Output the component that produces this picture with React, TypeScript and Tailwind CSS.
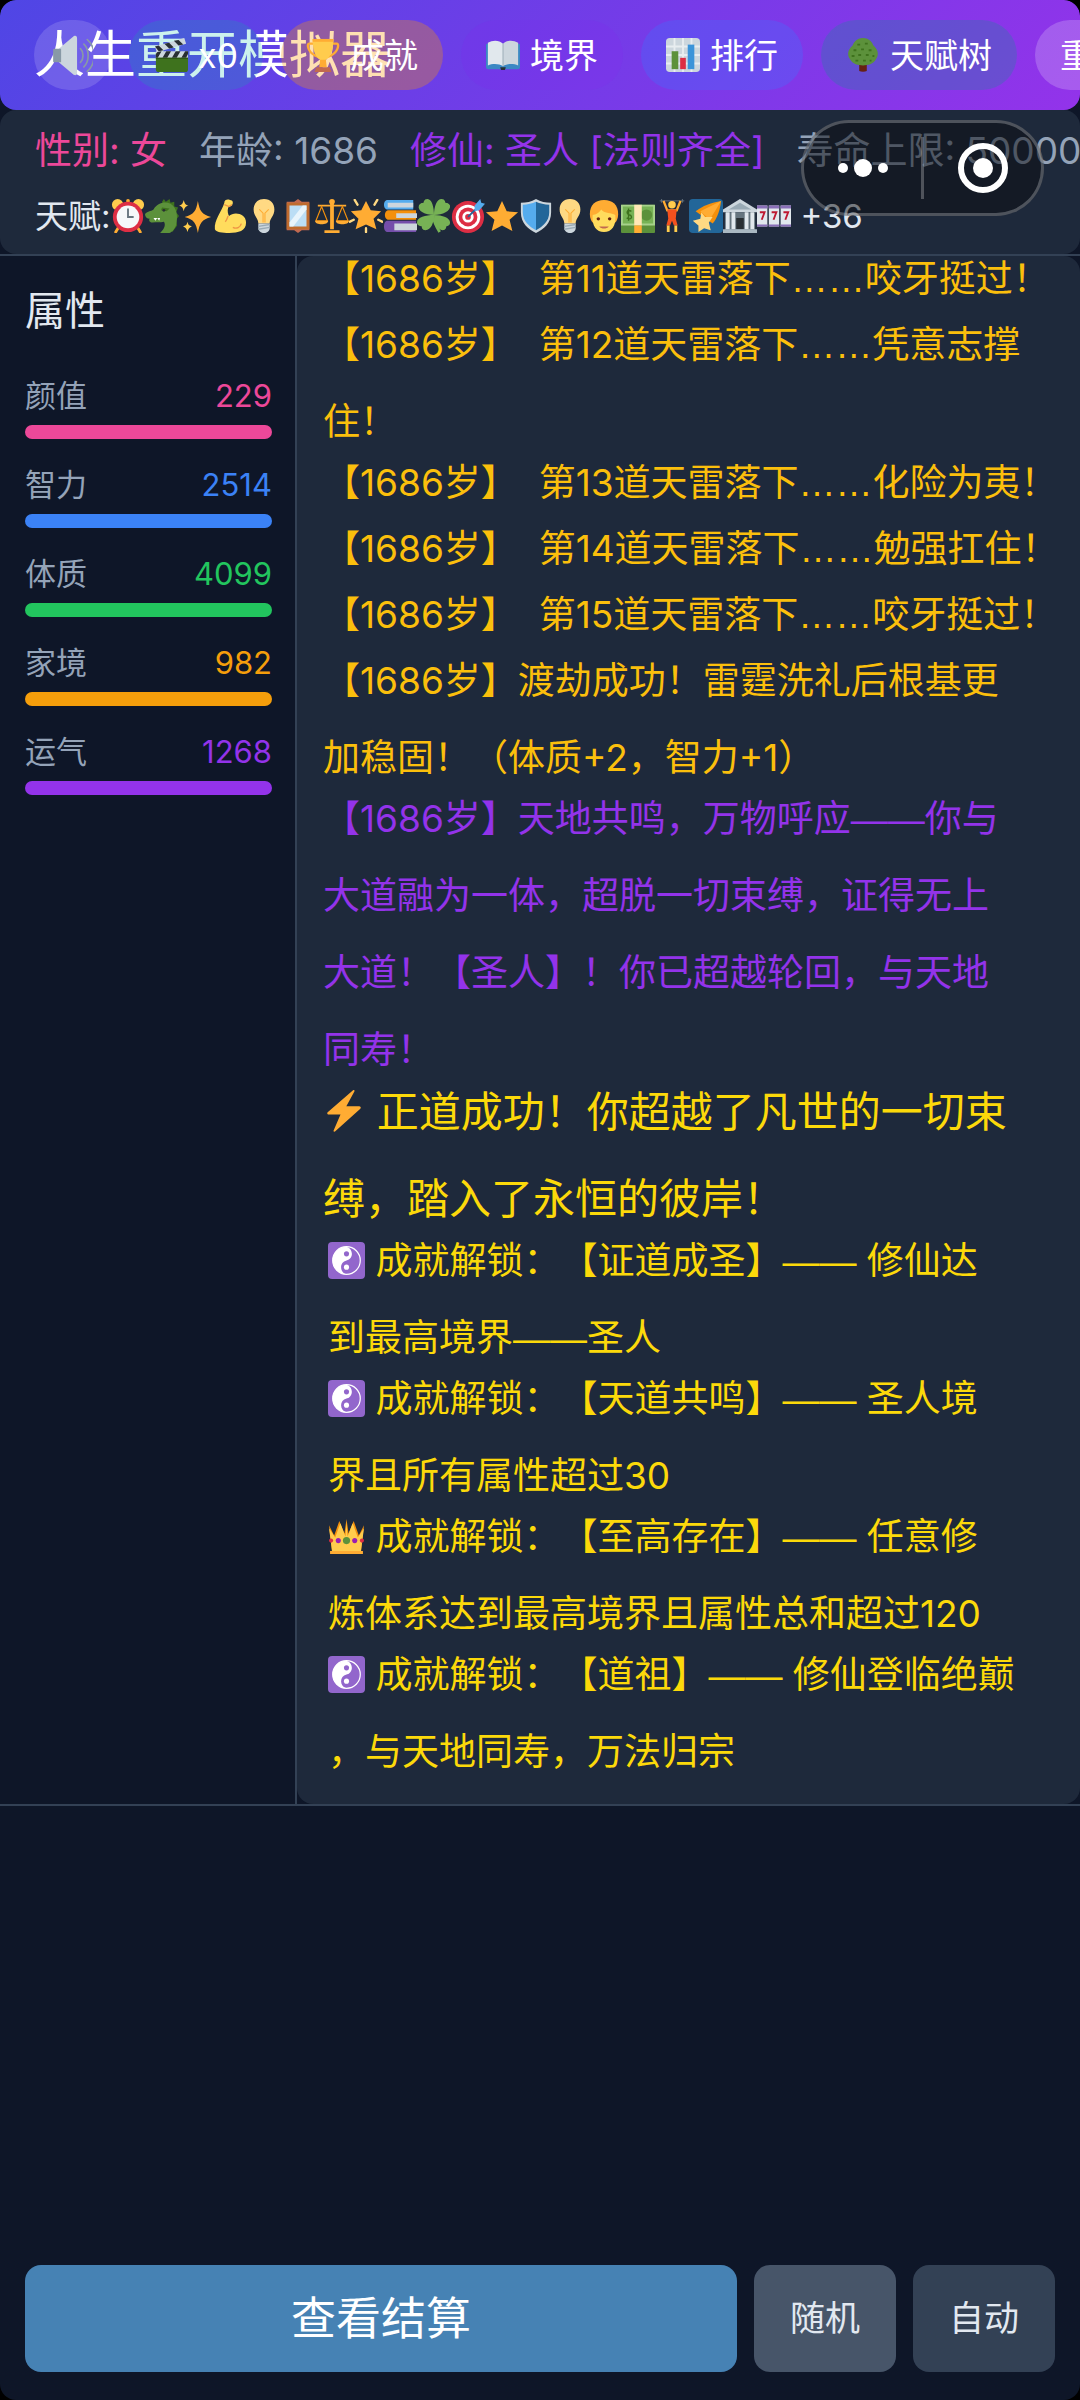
import React from 'react';

const ICONS: Record<string, React.ReactNode> = {
  speaker: (
    <>
      <path d="M6 12 19 1c2-1 3 0 3 2v30c0 2-1 3-3 2L6 24z" fill="#ccd6dd" />
      <path d="M2 12h6v12H2c-1 0-1-1-1-1V13s0-1 1-1z" fill="#8899a6" />
      <path d="M25 12c3 3 3 9 0 12M28 8c5 5 5 15 0 20M31 4c8 7 8 21 0 28" fill="none" stroke="#8899a6" strokeWidth="1.5" strokeLinecap="round" />
    </>
  ),
  clapper: (
    <>
      <path d="M2 15h34v18c0 2-1 3-3 3H5c-2 0-3-1-3-3z" fill="#3e721d" />
      <path d="M2 14h34v7H2z" fill="#ccd6dd" />
      <path d="m4 14 4 0-4 7H2v-4zM13 14h5l-4 7H9zM23 14h5l-4 7h-5zM33 14h3v3l-2 4h-5z" fill="#292f33" />
      <path d="M1 9 32 0l2 6L3 15z" fill="#ccd6dd" />
      <path d="m1 9 4-1 5 5-5 1zM11 6l5-1 5 5-5 1zM21 3l5-1 5 5-5 1z" fill="#292f33" />
      <path d="M2 21h34v1H2z" fill="#2a5110" />
    </>
  ),
  trophy: (
    <>
      <path d="M8 6H3C1 6 1 16 13 20M28 6h5c2 0 2 10-10 14" fill="none" stroke="#ffac33" strokeWidth="2.5" />
      <path d="M7 1h22c0 14-4 20-8 22v5h-6v-5C11 21 7 15 7 1z" fill="#ffcc4d" />
      <path d="M7 1h22v3H7z" fill="#ffac33" />
      <path d="M15 23h6l1 8h-8z" fill="#ffac33" />
      <path d="M11 31h14l2 5H9z" fill="#c1694f" />
    </>
  ),
  book: (
    <>
      <path d="M0 7c0-1 1-1 2-1h32c1 0 2 0 2 1v24c0 1-1 2-2 2H2c-1 0-2-1-2-2z" fill="#3b88c3" />
      <path d="M2 5c5-3 12-3 16 1v24c-4-3-11-3-16-1z" fill="#e1e8ed" />
      <path d="M34 5c-5-3-12-3-16 1v24c4-3 11-3 16-1z" fill="#ccd6dd" />
      <path d="M18 6v24" stroke="#99aab5" fill="none" />
      <path d="M15 31h6l-1 3h-4z" fill="#292f33" />
    </>
  ),
  chart: (
    <>
      <rect width="36" height="36" rx="4" fill="#ccd6dd" />
      <path d="M0 9h36M0 18h36M0 27h36M9 0v36M18 0v36M27 0v36" stroke="#e8edf0" strokeWidth="2" />
      <path d="M6 14h7v19H6z" fill="#5c913b" />
      <path d="M15 21h6v12h-6z" fill="#dd2e44" />
      <path d="M23 7h7v26h-7z" fill="#3b94d9" />
    </>
  ),
  tree: (
    <>
      <path d="M14 27h8v8c-2 1-6 1-8 0z" fill="#662113" />
      <path d="M18 0c7 0 10 5 11 8 5 4 6 10 3 14-3 6-9 7-14 7S7 28 4 22C1 18 2 12 7 8c1-3 4-8 11-8z" fill="#5c913b" />
      <path d="M12 7h3M20 6h3M8 13h3M16 12h3M24 13h3M6 19h3M13 18h3M21 18h3M28 19h2M10 24h3M18 24h3M25 24h2" stroke="#3e721d" strokeWidth="2" />
    </>
  ),
  clock: (
    <>
      <circle cx="7" cy="6" r="6" fill="#ffcc4d" />
      <circle cx="29" cy="6" r="6" fill="#ffcc4d" />
      <path d="m8 30-3 5M28 30l3 5" stroke="#ffac33" strokeWidth="3" strokeLinecap="round" />
      <circle cx="18" cy="2" r="2" fill="#ffac33" />
      <circle cx="18" cy="19" r="16" fill="#dd2e44" />
      <circle cx="18" cy="19" r="12" fill="#f5f8fa" />
      <path d="M18 10v9h6" fill="none" stroke="#66757f" strokeWidth="2" />
    </>
  ),
  dragon: (
    <>
      <path d="M18 3 20 0l2 3 4-3 1 4 4-1v5l4 1-2 5 3 4-3 4 1 6-5 7z" fill="#3e721d" />
      <path d="M0 16c2-3 6-3 9-5 4-7 12-9 18-6 7 4 8 14 6 22-1 4-4 8-7 9H16c5-5 6-9 4-12-4 1-8 0-12 1-4 0-4-3-3-4-3 0-5-2-5-5z" fill="#5c913b" />
      <path d="M5 20h11l-1 3-2-3-2 3-2-3z" fill="#fff" />
      <path d="m18 9 8 1-3 3-6-1z" fill="#3e721d" />
      <circle cx="20" cy="12" r="1.5" fill="#292f33" />
    </>
  ),
  sparkles: (
    <>
      <path d="M20 2c2 11 4 14 14 17-10 3-12 6-14 17-2-11-4-14-14-17 10-3 12-6 14-17z" fill="#ffac33" />
      <path d="M5 1c1 4 2 5 5 6-3 1-4 2-5 6-1-4-2-5-5-6 3-1 4-2 5-6zM9 24c1 4 2 4 5 5-3 1-4 2-5 6-1-4-2-5-5-6 3-1 4-1 5-5z" fill="#ffcc4d" />
    </>
  ),
  muscle: (
    <>
      <path d="M12 4c0-3 3-4 6-3 3 0 4 3 2 6l-4 2c-1 4 0 7 1 9 5-5 18-3 18 7 0 9-8 11-18 11-7 0-14-1-15-4C1 22 9 14 12 4z" fill="#ffdc5d" />
      <path d="m12 6 5 2 3-2M16 18c-1 2-1 4-3 6M21 30c4 2 8 0 9-4" fill="none" stroke="#ef9645" strokeWidth="1.5" />
    </>
  ),
  bulb: (
    <>
      <path d="M18 0c7 0 11 5 11 11 0 7-5 9-5 15H12c0-6-5-8-5-15C7 5 11 0 18 0z" fill="#ffd983" />
      <path d="M17 25V15l-4-4M19 25V15l4-4" fill="none" stroke="#ffac33" strokeWidth="1.2" />
      <path d="M12 26h12v5c0 3-3 5-6 5s-6-2-6-5z" fill="#ccd6dd" />
      <path d="m12 29 12-2M12 32l12-2" stroke="#99aab5" strokeWidth="1.5" />
    </>
  ),
  mirror: (
    <>
      <path d="M6 3h8l4-3 4 3h8v30h-8l-4 3-4-3H6z" fill="#c1694f" />
      <path d="M6 4h24v28H6z" fill="#bf6b2e" />
      <path d="M9 7h18v22H9z" fill="#bbddf5" />
      <path d="M9 25 23 7h4v4L13 29H9z" fill="#e8f4fc" />
    </>
  ),
  scales: (
    <>
      <path d="M16 2h4v30h-4zM3 6h30v2H3zM10 33h16v3H10z" fill="#ffac33" />
      <circle cx="18" cy="3" r="3" fill="#ffac33" />
      <path d="M7 8 1 23h12zM29 8l-6 15h12z" fill="none" stroke="#f4900c" strokeWidth="1.2" />
      <path d="M0 23h14c0 5-14 5-14 0zM22 23h14c0 5-14 5-14 0z" fill="#ffac33" />
    </>
  ),
  glow: (
    <>
      <path d="m18 2 5 10 11 1-8 8 3 11-11-5-11 5 3-11-8-8 11-1z" fill="#ffac33" />
      <path d="m6 1 3 5M30 1l-3 5M1 24l4-2M35 24l-4-2M18 31v4" stroke="#ffd983" strokeWidth="2.5" strokeLinecap="round" />
    </>
  ),
  books: (
    <>
      <path d="M4 1h28v10H4C0 10 0 2 4 1z" fill="#55acee" />
      <path d="M5 4h27v5H5z" fill="#ccd6dd" />
      <path d="M5 12h30v10H5c-4-1-4-9 0-10z" fill="#f4900c" />
      <path d="M14 15h22v5H14z" fill="#ccd6dd" />
      <path d="M4 23h31v12H4c-4-1-4-11 0-12z" fill="#744eaa" />
      <path d="M12 26h24v7H12z" fill="#ccd6dd" />
    </>
  ),
  clover: (
    <>
      <path d="M17 18c1 7 4 12 7 17" fill="none" stroke="#77b255" strokeWidth="3" />
      <path d="M18 17C9 17 0 13 2 7c1-3 5-3 5-3s0-4 4-4c5 0 7 9 7 17zM18 17c0-9 3-17 8-17 4 0 4 4 4 4s4 0 5 3c1 6-8 10-17 10zM18 17c-9 0-18 2-18 8 0 4 5 4 5 4s0 4 4 4c6 0 9-8 9-16zM18 17c9 0 17 3 17 8 0 4-4 4-4 4s0 4-4 4c-5 0-9-8-9-16z" fill="#77b255" />
    </>
  ),
  target: (
    <>
      <circle cx="18" cy="19" r="17" fill="#dd2e44" />
      <circle cx="18" cy="19" r="13" fill="#fff" />
      <circle cx="18" cy="19" r="10" fill="#dd2e44" />
      <circle cx="18" cy="19" r="6" fill="#fff" />
      <circle cx="18" cy="19" r="3" fill="#dd2e44" />
      <path d="M18 19 29 8" stroke="#269" strokeWidth="2" />
      <path d="m25 7 6-7 1 4 4 1-6 7-5 1z" fill="#55acee" />
    </>
  ),
  star: <path d="m18 2 5 11 12 1-9 8 3 12-11-6-11 6 3-12-9-8 12-1z" fill="#ffac33" />,
  shield: (
    <>
      <path d="M18 0c5 3 10 4 16 4v10c0 12-8 18-16 22C10 32 2 26 2 14V4c6 0 11-1 16-4z" fill="#ccd6dd" />
      <path d="M18 3v30C11 29 4 24 4 14V6c5 0 10-1 14-3z" fill="#55acee" />
      <path d="M18 3v30c7-4 14-9 14-19V6c-5 0-10-1-14-3z" fill="#226699" />
    </>
  ),
  boy: (
    <>
      <path d="M3 16C3 6 9 1 18 1s15 5 15 15c0 5-2 8-3 9H6c-1-1-3-4-3-9z" fill="#ffac33" />
      <path d="M6 17c5-1 8-4 9-6 4 5 11 3 15 6 1 12-4 18-12 18S5 29 6 17z" fill="#ffdc5d" />
      <circle cx="12" cy="21" r="1.8" fill="#662113" />
      <circle cx="24" cy="21" r="1.8" fill="#662113" />
      <path d="M13 29h10c-2 3-8 3-10 0z" fill="#c1694f" />
    </>
  ),
  cash: (
    <>
      <rect y="6" width="36" height="30" rx="1" fill="#5c913b" />
      <path d="M0 6h36v22H0z" fill="#a7d28b" />
      <path d="M2 8h32v18H2z" fill="#77b255" />
      <circle cx="27" cy="17" r="6" fill="#5c913b" />
      <path d="M11 13c-5-3-6 3-2 4s2 6-3 3M8 10v13" fill="none" stroke="#3e721d" strokeWidth="1.5" />
      <path d="M14 6h8v22h-8z" fill="#ffe8b6" />
      <path d="M14 28h8v8h-8z" fill="#ffac33" />
    </>
  ),
  lifter: (
    <>
      <path d="M5 2h26M7 0v4M29 0v4" stroke="#66757f" strokeWidth="1" />
      <path d="m9 2 4 10h10l4-10" fill="none" stroke="#ffac33" strokeWidth="2.5" />
      <circle cx="18" cy="6" r="4" fill="#ffcc4d" />
      <path d="M13 11h10l-1 10 2 7h-4l-2-5-2 5h-4l2-7z" fill="#f4511e" />
      <path d="M14 28v7M22 28v7" stroke="#ffcc4d" strokeWidth="3" />
    </>
  ),
  comet: (
    <>
      <rect width="36" height="36" rx="4" fill="#226699" />
      <path d="M7 13C14 7 24 4 34 2c-1 9-4 18-9 24z" fill="#f4900c" />
      <path d="M12 13 34 2 22 22z" fill="#ffac33" />
      <path d="m13 14 4 5 8 0-4 6 2 8-7-2-6 4v-7l-6-5 8-2z" fill="#ffd983" />
    </>
  ),
  temple: (
    <>
      <path d="M18 0 36 11v3H0v-3z" fill="#ccd6dd" />
      <path d="M18 4 30 11H6z" fill="#99aab5" />
      <path d="M2 14h32v19H2z" fill="#66757f" />
      <path d="M3 14h4v18H3zM9 14h4v18H9zM23 14h4v18h-4zM29 14h4v18h-4z" fill="#e1e8ed" />
      <path d="M14 20h8v12h-8z" fill="#292f33" />
      <path d="M0 32h36v4H0z" fill="#aab8c2" />
    </>
  ),
  slots: (
    <>
      <path d="M0 7h11v22H0zM12.5 7h11v22h-11zM25 7h11v22H25z" fill="#e1e8ed" />
      <path d="M0 7h11v3H0zM12.5 7h11v3h-11zM25 7h11v3H25zM0 27h11v2H0zM12.5 27h11v2h-11zM25 27h11v2H25z" fill="#8a6fb8" />
      <path d="M3 14h5l-3 8M15.5 14h5l-3 8M28 14h5l-3 8" fill="none" stroke="#be1931" strokeWidth="2" />
    </>
  ),
  bolt: <path d="M26 0 4 19c-1 1 0 2 1 2h10L9 35c0 1 1 1 2 0l21-19c1-1 0-2-1-2H20L27 1c0-1 0-1-1-1z" fill="#ffac33" />,
  taiji: (
    <>
      <rect width="36" height="36" rx="4" fill="#9266cc" />
      <circle cx="18" cy="18" r="13.4" fill="none" stroke="#fff" strokeWidth="1.2" />
      <path d="M18 4.5a13.5 13.5 0 0 0 0 27c-7-2-7-12 0-13.5s7-11.5 0-13.5z" fill="#fff" />
      <circle cx="18" cy="11.5" r="2.5" fill="#9266cc" />
      <circle cx="18" cy="24.5" r="2.5" fill="#fff" />
    </>
  ),
  crown: (
    <>
      <path d="m1 7 5 10 5-14 5 12 2-14 2 14 5-12 5 14 5-10-3 27H4z" fill="#f4900c" />
      <path d="m1 10 6 9 5-14 5 13 1-14 1 14 5-13 5 14 6-9-3 22H4z" fill="#ffcc4d" />
      <path d="M2 32h32v3H2z" fill="#ffac33" />
      <circle cx="18" cy="22" r="3.5" fill="#5c913b" />
      <circle cx="10" cy="22" r="2.5" fill="#9a1fb0" />
      <circle cx="26" cy="22" r="2.5" fill="#9a1fb0" />
      <circle cx="3" cy="22" r="2" fill="#dd2e44" />
      <circle cx="33" cy="22" r="2" fill="#dd2e44" />
    </>
  ),
};

function Icon({ name, className }: { name: string; className: string }) {
  return (
    <svg viewBox="0 0 36 36" className={`shrink-0 ${className}`} aria-hidden="true">
      {ICONS[name]}
    </svg>
  );
}

const navItems = [
  { icon: 'speaker', label: '', style: 'bg-white/15 px-[18px]' },
  { icon: 'clapper', label: 'x0', style: 'bg-teal-500/20 px-[25px]' },
  { icon: 'trophy', label: '成就', style: 'bg-amber-500/30 px-[25px]' },
  { icon: 'book', label: '境界', style: 'bg-purple-600/10 px-[25px]' },
  { icon: 'chart', label: '排行', style: 'bg-blue-500/25 px-[25px]' },
  { icon: 'tree', label: '天赋树', style: 'bg-teal-600/25 px-[25px]' },
  { icon: '', label: '重开', style: 'bg-white/20 px-[25px]' },
];

const talents = [
  'clock', 'dragon', 'sparkles', 'muscle', 'bulb', 'mirror', 'scales', 'glow', 'books', 'clover',
  'target', 'star', 'shield', 'bulb', 'boy', 'cash', 'lifter', 'comet', 'temple', 'slots',
];

const stats = [
  { label: '颜值', value: 229, text: 'text-[#ec4899]', bar: 'bg-[#ec4899]' },
  { label: '智力', value: 2514, text: 'text-[#3b82f6]', bar: 'bg-[#3b82f6]' },
  { label: '体质', value: 4099, text: 'text-[#22c55e]', bar: 'bg-[#22c55e]' },
  { label: '家境', value: 982, text: 'text-[#f59e0b]', bar: 'bg-[#f59e0b]' },
  { label: '运气', value: 1268, text: 'text-[#9333ea]', bar: 'bg-[#9333ea]' },
];

type Entry = { kind: 'trial' | 'ascend' | 'victory' | 'unlock'; text: string; icon?: string };

const entries: Entry[] = [
  { kind: 'trial', text: '【1686岁】  第11道天雷落下……咬牙挺过！' },
  { kind: 'trial', text: '【1686岁】  第12道天雷落下……凭意志撑\n住！' },
  { kind: 'trial', text: '【1686岁】  第13道天雷落下……化险为夷！' },
  { kind: 'trial', text: '【1686岁】  第14道天雷落下……勉强扛住！' },
  { kind: 'trial', text: '【1686岁】  第15道天雷落下……咬牙挺过！' },
  { kind: 'trial', text: '【1686岁】渡劫成功！雷霆洗礼后根基更\n加稳固！（体质+2，智力+1）' },
  { kind: 'ascend', text: '【1686岁】天地共鸣，万物呼应——你与\n大道融为一体，超脱一切束缚，证得无上\n大道！【圣人】！你已超越轮回，与天地\n同寿！' },
  { kind: 'victory', icon: 'bolt', text: '正道成功！你超越了凡世的一切束\n缚，踏入了永恒的彼岸！' },
  { kind: 'unlock', icon: 'taiji', text: '成就解锁：【证道成圣】—— 修仙达\n到最高境界——圣人' },
  { kind: 'unlock', icon: 'taiji', text: '成就解锁：【天道共鸣】—— 圣人境\n界且所有属性超过30' },
  { kind: 'unlock', icon: 'crown', text: '成就解锁：【至高存在】—— 任意修\n炼体系达到最高境界且属性总和超过120' },
  { kind: 'unlock', icon: 'taiji', text: '成就解锁：【道祖】—— 修仙登临绝巅\n，与天地同寿，万法归宗' },
];

const kindStyle = {
  trial: 'text-[37px] leading-[77px] text-[#fbbf0c]',
  ascend: 'text-[37px] leading-[77px] text-[#9333ea]',
  victory: '-mt-1 text-[42px] leading-[87px] text-[#fcd90a]',
  unlock: 'pl-[5px] text-[37px] leading-[77px] text-[#fcd90a]',
};

function tailMargin(entry: Entry) {
  if (entry.kind === 'victory') return '-mb-5';
  return entry.text.includes('\n') ? '-mb-4' : '-mb-[11px]';
}

// Dashes and ellipses come from a face where they fill two full cells
function LogText({ text }: { text: string }) {
  return (
    <>
      {text.split(/(——|……)/).map((part, i) =>
        part === '——' || part === '……' ? (
          <span key={i} className="font-['Liberation_Sans',sans-serif] leading-none">{part}</span>
        ) : (
          <React.Fragment key={i}>{part}</React.Fragment>
        )
      )}
    </>
  );
}

function LogEntry({ entry }: { entry: Entry }) {
  return (
    <p className={`whitespace-pre ${kindStyle[entry.kind]} ${tailMargin(entry)}`}>
      {entry.icon && (
        <>
          <Icon name={entry.icon} className="inline-block size-[1em] align-[-5px]" />{' '}
        </>
      )}
      <LogText text={entry.text} />
    </p>
  );
}

function Header() {
  return (
    <header className="grid grid-cols-1 items-center overflow-hidden rounded-2xl bg-[linear-gradient(135deg,#4f46e5,#9333ea)] py-5 pl-[34px] text-white">
      <h1 className="col-start-1 row-start-1 text-[51px] leading-[70px] whitespace-nowrap">人生重开模拟器</h1>
      <nav className="col-start-1 row-start-1 flex min-w-0 gap-[18px]">
        {navItems.map((item) => (
          <button
            key={item.icon + item.label}
            aria-label={item.label || '声音'}
            className={`flex h-[70px] shrink-0 items-center gap-[10px] rounded-full text-[34px] whitespace-nowrap ${item.style}`}
          >
            {item.icon && <Icon name={item.icon} className={item.label ? 'size-[34px]' : 'size-[41px]'} />}
            {item.label}
          </button>
        ))}
      </nav>
    </header>
  );
}

function StatusBar() {
  return (
    <section className="overflow-hidden rounded-2xl bg-[#1e293b] px-[35px] pt-4 pb-[13px] whitespace-nowrap">
      <div className="flex gap-8 text-[37px] leading-[50px] text-[#94a3b8]">
        <span className="text-[#ec4899]">性别: 女</span>
        <span>年龄: 1686</span>
        <span className="text-[#9333ea]">修仙: 圣人 [法则齐全]</span>
        <span>寿命上限: 50000</span>
      </div>
      <div className="mt-[15px] flex items-center text-[33px] leading-[50px] text-[#e2e8f0]">
        天赋:
        {talents.map((name, i) => (
          <Icon key={i} name={name} className="size-[34px]" />
        ))}
        <span className="ml-[10px]">+36</span>
      </div>
    </section>
  );
}

function StatsPanel() {
  return (
    <aside className="w-[297px] shrink-0 border-r-2 border-[#334155] pt-[30px] pr-[23px] pl-[25px]">
      <h2 className="text-[40px] leading-[50px] text-[#e2e8f0]">属性</h2>
      <div className="mt-[35px] flex flex-col gap-[21px]">
        {stats.map((stat) => (
          <div key={stat.label}>
            <div className="flex justify-between text-[31px] leading-[50px]">
              <span className="text-[#94a3b8]">{stat.label}</span>
              <span className={stat.text}>{stat.value}</span>
            </div>
            <div className={`mt-1 h-[14px] rounded-full ${stat.bar}`} />
          </div>
        ))}
      </div>
    </aside>
  );
}

function Capsule() {
  return (
    <div className="absolute top-[120px] right-[36px] flex h-24 w-[243px] items-center rounded-full border-3 border-white/25 bg-[#0a0c10]/50">
      <button aria-label="更多" className="flex flex-1 items-center justify-center gap-[6px]">
        <span className="size-[10px] rounded-full bg-white" />
        <span className="size-[18px] rounded-full bg-white" />
        <span className="size-[10px] rounded-full bg-white" />
      </button>
      <span className="h-[62px] w-[3px] bg-white/25" />
      <button aria-label="关闭" className="flex flex-1 items-center justify-center">
        <span className="flex size-[50px] items-center justify-center rounded-full border-6 border-white">
          <span className="size-5 rounded-full bg-white" />
        </span>
      </button>
    </div>
  );
}

export default function App() {
  return (
    <div className="h-screen bg-black">
      <div className="relative flex h-full flex-col overflow-hidden rounded-2xl bg-[#0e1628] font-[Inter,'Noto_Sans_CJK_SC',sans-serif] [text-spacing-trim:space-all]">
        <Header />
        <StatusBar />
        <main className="flex min-h-0 flex-1 border-y-2 border-[#334155]">
          <StatsPanel />
          <section className="flex min-w-0 flex-1 flex-col justify-end overflow-hidden rounded-2xl bg-[#1e293b] pb-[30px] pl-[26px]">
            {entries.map((entry, i) => (
              <LogEntry key={i} entry={entry} />
            ))}
          </section>
        </main>
        <footer className="flex gap-[17px] px-[25px] pt-[459px] pb-7 text-[#e2e8f0]">
          <button className="h-[107px] flex-1 rounded-2xl bg-[#4682b4] text-[45px] text-white">查看结算</button>
          <button className="w-[142px] rounded-2xl bg-[#475569] text-[35px]">随机</button>
          <button className="w-[142px] rounded-2xl bg-[#334155] text-[35px]">自动</button>
        </footer>
        <Capsule />
      </div>
    </div>
  );
}
